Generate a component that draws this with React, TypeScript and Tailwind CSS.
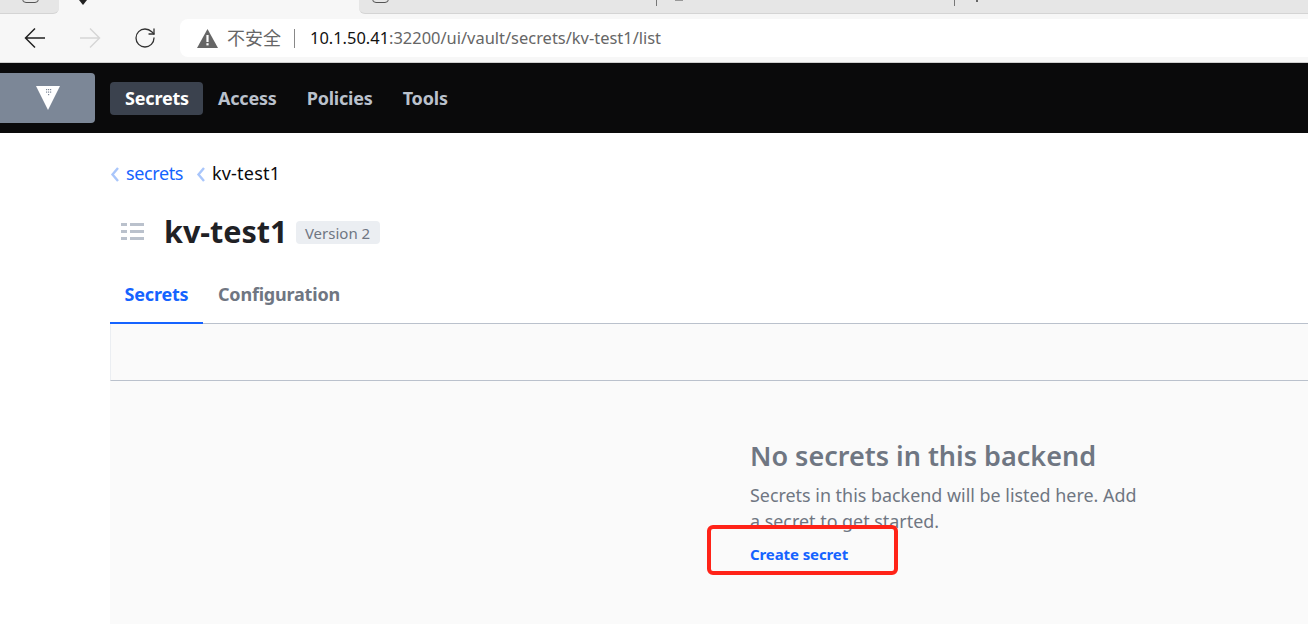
import React from 'react';
import { RotateCw } from 'lucide-react';

const VaultLogo = () => (
  <svg width="26" height="26" viewBox="0 0 26 26">
    <path d="M1 1h24L13 25z" fill="#fff" />
    <g fill="#7c8797">
      <rect x="11" y="4" width="1.2" height="1.2" />
      <rect x="13" y="4" width="1.2" height="1.2" />
      <rect x="15" y="4" width="1.2" height="1.2" />
      <rect x="11" y="6.5" width="1.2" height="1.2" />
      <rect x="13" y="6.5" width="1.2" height="1.2" />
      <rect x="15" y="6.5" width="1.2" height="1.2" />
      <rect x="13" y="9" width="1.2" height="1.2" />
    </g>
  </svg>
);

const BackArrow = ({ color, flip }: { color: string; flip?: boolean }) => (
  <svg width="22" height="22" viewBox="0 0 22 22" className={flip ? 'rotate-180' : ''} fill="none" stroke={color} strokeWidth="1.5">
    <path d="M1.5 11H21M11 1.5L1.5 11l9.5 9.5" />
  </svg>
);

const Crumb = () => (
  <svg width="10" height="16" viewBox="0 0 10 16" fill="none" stroke="#a9c6fb" strokeWidth="2.4">
    <path d="M8 2L2.5 8.5 8 15" />
  </svg>
);

const App: React.FC = () => {
  return (
    <div className="relative w-[1308px] h-[644px] overflow-hidden bg-white font-['Noto_Sans','Noto_Sans_CJK_SC',sans-serif]">
      {/* Barra del navegador */}
      <div className="h-[14px] bg-[#f7f7f7] flex items-start">
        <div className="w-[59px] h-[14px] bg-[#e6e6e6] border-b border-[#d4d4d4] rounded-br-md overflow-hidden">
          <div className="ml-[22px] -mt-[8px] w-[17px] h-[11px] border border-[#555] rounded-sm" />
        </div>
        <div className="w-[300px] h-[14px] pl-[20px]">
          <svg width="8" height="5" viewBox="0 0 8 5"><path d="M0 0h8L4 5z" fill="#222" /></svg>
        </div>
        <div className="flex-1 h-[14px] bg-[#e6e6e6] border-b border-[#d4d4d4] rounded-bl-md overflow-hidden flex items-start">
          <div className="ml-[13px] -mt-[8px] w-[17px] h-[11px] border border-[#555] rounded-sm" />
          <div className="ml-[267px] w-[1px] h-[6px] bg-[#777]" />
          <div className="ml-[18px] w-[8px] h-[1px] bg-[#999]" />
          <div className="ml-[271px] w-[1px] h-[6px] bg-[#777]" />
          <div className="ml-[21px] w-[2px] h-[2px] bg-[#666]" />
        </div>
      </div>
      <div className="h-[49px] bg-[#f7f7f7] border-b border-[#cfcfcf] flex items-center">
        <div className="ml-[24px]"><BackArrow color="#222" /></div>
        <div className="ml-[33px]"><BackArrow color="#d6d6d6" flip /></div>
        <RotateCw className="ml-[32px] w-[24px] h-[24px] text-[#333]" strokeWidth={1.3} />
        <div className="ml-[23px] flex-1 h-[38px] bg-white rounded-l-lg flex items-center pl-[17px]">
          <svg width="21" height="19" viewBox="0 0 21 19">
            <path d="M10.5 0L21 19H0z" fill="#666" />
            <rect x="9.4" y="6" width="2.2" height="7" fill="#fff" />
            <rect x="9.4" y="14.2" width="2.2" height="2.2" fill="#fff" />
          </svg>
          <span className="ml-[9px] text-[18px] text-[#666]">不安全</span>
          <div className="ml-[13px] w-[1px] h-[19px] bg-[#888]" />
          <div className="ml-[15px] text-[16.45px]">
            <span className="text-[#111]">10.1.50.41</span>
            <span className="text-[#666]">:32200/ui/vault/secrets/kv-test1/list</span>
          </div>
        </div>
      </div>

      {/* Navegacion */}
      <div className="h-[70px] bg-[#0a0a0b] flex items-center">
        <div className="w-[95px] h-[50px] bg-[#7c8797] rounded-r flex items-center justify-center">
          <VaultLogo />
        </div>
        <div className="ml-[15px] flex items-center text-[18px] font-bold tracking-[-0.2px]">
          <span className="h-[33px] w-[93px] pl-[1px] flex items-center justify-center rounded-sm bg-[#3b424e] text-white">Secrets</span>
          <span className="ml-[15px] text-[#bac1cc]">Access</span>
          <span className="ml-[30px] text-[#bac1cc]">Policies</span>
          <span className="ml-[30px] text-[#bac1cc]">Tools</span>
        </div>
      </div>

      {/* Contenido */}
      <div className="pl-[110px]">
        <div className="h-[81px] flex items-center text-[18px]">
          <Crumb />
          <span className="ml-[6px] text-[#1563ff] tracking-[-0.4px]">secrets</span>
          <div className="ml-[13px]"><Crumb /></div>
          <span className="ml-[6px] text-[#0a0a0b] tracking-[0.2px]">kv-test1</span>
        </div>
        <div className="h-[36px] flex items-center">
          <svg width="26" height="20" viewBox="0 0 26 20" className="ml-[10px]">
            <g fill="#bac1cc">
              <rect x="1" y="1" width="6" height="3" />
              <rect x="10" y="1" width="14" height="3" />
              <rect x="1" y="8" width="6" height="3" />
              <rect x="10" y="8" width="14" height="3" />
              <rect x="1" y="15" width="6" height="3" />
              <rect x="10" y="15" width="14" height="3" />
            </g>
          </svg>
          <h1 className="ml-[18px] -mt-[2px] text-[30.5px] font-bold text-[#1f2125] leading-none">kv-test1</h1>
          <span className="ml-[8px] h-[23px] mt-[1px] w-[84px] pt-[1px] flex items-center justify-center rounded-sm bg-[#ebeef2] text-[15px] text-[#6f7682]">Version 2</span>
        </div>
        <div className="h-[73px] mt-[1px] border-b border-[#bac1cc] flex items-end text-[18px] font-bold tracking-[-0.2px]">
          <span className="h-[55px] w-[93px] pb-[2px] flex items-center justify-center border-b-2 -mb-[1px] border-[#1563ff] text-[#1563ff]">Secrets</span>
          <span className="h-[55px] px-[15px] pb-[2px] flex items-center text-[#6f7682]">Configuration</span>
        </div>
        <div className="h-[57px] bg-[#fafafa] border-l border-b border-[#bac1cc] border-l-[#ebeef2]" />
        <div className="h-[243px] bg-[#fafafa]">
          <div className="ml-[640px] w-[400px] pt-[55px]">
            <h2 className="text-[27px] font-semibold text-[#6f7682] leading-[40px]">No secrets in this backend</h2>
            <p className="mt-[6px] text-[17.9px] text-[#6f7682] leading-[26px] w-[395px]">
              Secrets in this backend will be listed here. Add a secret to get started.
            </p>
            <a className="block mt-[9px] text-[15px] font-bold text-[#1563ff] tracking-[-0.1px]">Create secret</a>
          </div>
        </div>
      </div>

      {/* Recuadro rojo de la anotacion */}
      <div className="absolute left-[707px] top-[525px] w-[191px] h-[50px] border-4 border-[#ff2318] rounded-md" />
    </div>
  );
};

export default App;
